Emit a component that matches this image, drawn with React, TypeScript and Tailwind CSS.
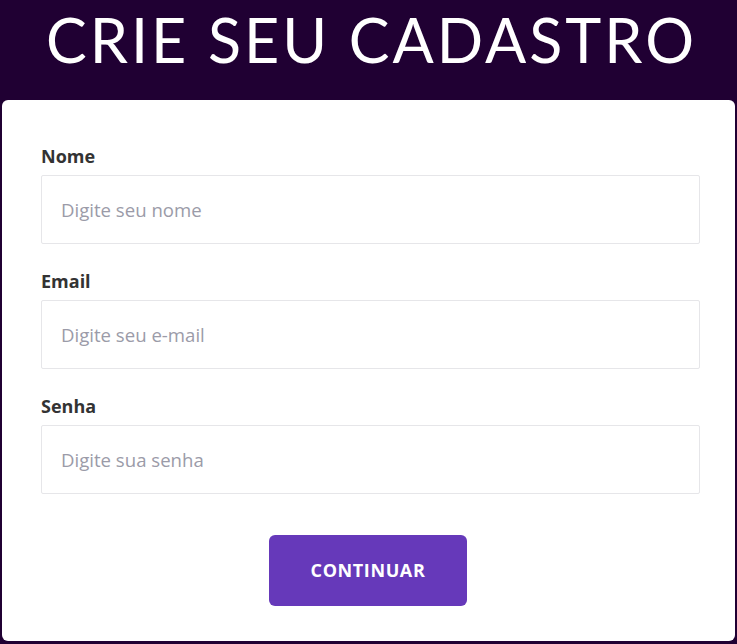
export default function App() {
  return (
    <div className="min-h-[644px] bg-[#200033] px-[2px] pb-[3px] flex flex-col">
      <h1 className="h-[100px] flex items-start justify-center pt-[4px] pl-[6px] text-white text-[61px] leading-[72px] font-['Lato',sans-serif] tracking-[3px]">
        CRIE SEU CADASTRO
      </h1>
      <form className="flex-1 bg-white rounded-[6px] pl-[39px] pr-[35px] pt-[44px] flex flex-col font-['Open_Sans',sans-serif]">
        <Field label="Nome" placeholder="Digite seu nome" />
        <Field label="Email" placeholder="Digite seu e-mail" />
        <Field label="Senha" placeholder="Digite sua senha" type="password" />
        <div className="flex justify-center mt-[16px] mr-[5px]">
          <button
            type="button"
            className="w-[198px] h-[71px] rounded-[6px] bg-[#6639ba] text-white text-[18px] font-bold tracking-[0.6px]"
          >
            CONTINUAR
          </button>
        </div>
      </form>
    </div>
  );
}

const Field = ({ label, placeholder, type = "text" }) => {
  return (
    <div className="flex flex-col mb-[25px]">
      <label className="text-[18px] leading-[24px] font-bold text-[#333333] mb-[7px]">{label}</label>
      <input
        type={type}
        placeholder={placeholder}
        className="h-[69px] border border-[#e6e6e9] rounded-[2px] px-[19px] text-[18.6px] text-[#333] placeholder:text-[#9b9ba8] outline-none"
      />
    </div>
  );
};
